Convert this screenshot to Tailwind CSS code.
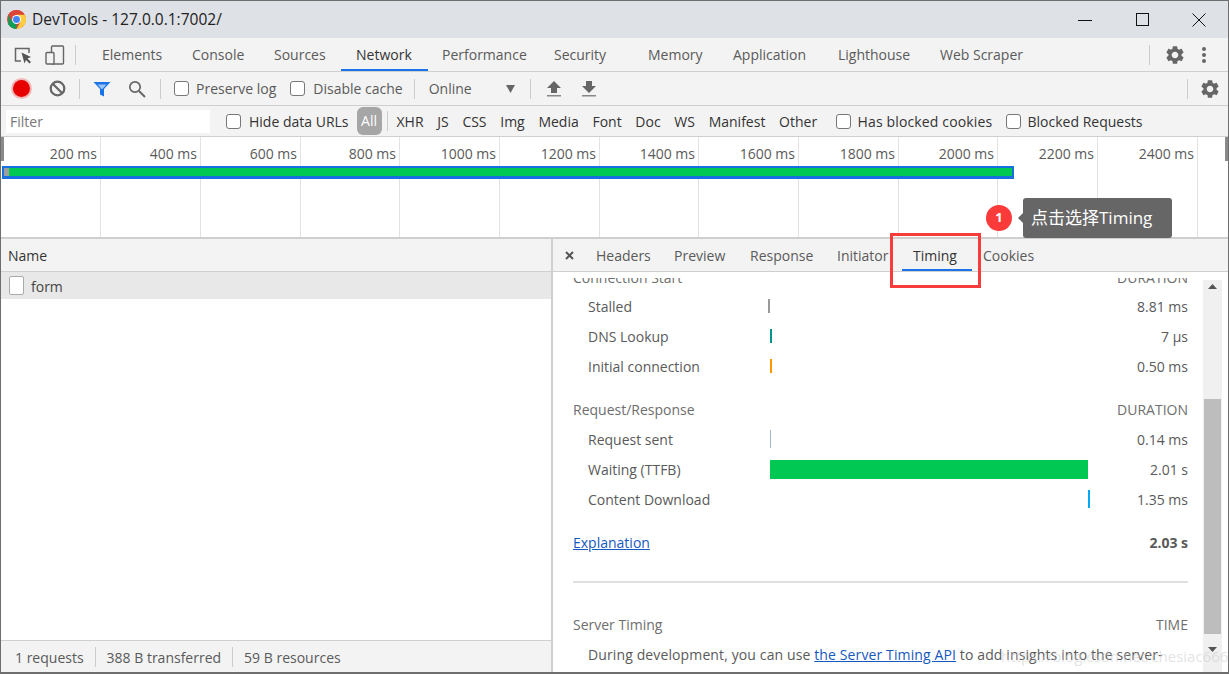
<!DOCTYPE html>
<html lang="en">
<head>
<meta charset="UTF-8">
<title>DevTools - 127.0.0.1:7002/</title>
<script src="https://cdn.jsdelivr.net/npm/@tailwindcss/browser@4"></script>
</head>
<body class="m-0 overflow-hidden bg-white">
<div class="relative w-[1229px] h-[674px] overflow-hidden flex flex-col border-t border-x border-b-2 border-[#6e6e6e] bg-white text-[14px] text-[#5a5a5a] font-['Open_Sans','Noto_Sans_CJK_SC',sans-serif]">

  <!-- title bar -->
  <div class="h-[37px] shrink-0 bg-[#dee1e6] flex items-center pl-[6px] text-[#222]">
    <svg class="w-[19px] h-[19px]" viewBox="0 0 24 24">
      <circle cx="12" cy="12" r="12" fill="#db4437"/>
      <path d="M12 24 A12 12 0 0 1 1.6 18 L1.6 6 L7 9 L12 12 Z" fill="#0f9d58"/>
      <path d="M1.6 6 A12 12 0 0 1 12 0 H12 A12 12 0 0 1 22.4 6 H12 L7 15 Z" fill="#db4437"/>
      <path d="M12 6 H22.4 A12 12 0 0 1 12 24 L17 15 Z" fill="#ffcd40"/>
      <circle cx="12" cy="12" r="5.6" fill="#fff"/>
      <circle cx="12" cy="12" r="4.4" fill="#4285f4"/>
    </svg>
    <span class="ml-[6px] text-[15.5px]">DevTools - 127.0.0.1:7002/</span>
    <div class="ml-auto flex items-center text-[#111]">
      <svg class="w-[14px] h-[14px] mr-[44px]" viewBox="0 0 14 14"><path d="M0 7.5H14" stroke="#111"/></svg>
      <svg class="w-[14px] h-[14px] mr-[42px]" viewBox="0 0 14 14"><rect x="0.5" y="0.5" width="12" height="12" fill="none" stroke="#111"/></svg>
      <svg class="w-[14px] h-[14px] mr-[22px]" viewBox="0 0 14 14"><path d="M0.5 0.5L13.5 13.5M13.5 0.5L0.5 13.5" stroke="#111"/></svg>
    </div>
  </div>

  <!-- panel tabs -->
  <div class="h-[34px] shrink-0 bg-[#f3f3f3] border-b border-[#cfcfcf] flex items-center">
    <svg class="ml-[12px] w-[20px] h-[20px]" viewBox="0 0 20 20" fill="none">
      <path d="M8 16H2.5V3.5H16V8" stroke="#666" stroke-width="1.5"/>
      <path d="M8.5 7.5L18 12L14.5 13.5L18 17L16.5 18.5L13 15L11.5 18.5Z" fill="#555"/>
    </svg>
    <svg class="ml-[12px] w-[20px] h-[20px]" viewBox="0 0 20 20" fill="none">
      <rect x="6.5" y="1" width="12" height="18" rx="1" stroke="#666" stroke-width="1.4"/>
      <rect x="1" y="7.5" width="8" height="11.5" rx="1" fill="#f3f3f3" stroke="#666" stroke-width="1.4"/>
    </svg>
    <div class="ml-[10px] w-px h-[20px] bg-[#ccc]"></div>
    <div class="flex h-full ml-[26px]">
      <div class="w-[90px] leading-[33px]">Elements</div>
      <div class="w-[82px] leading-[33px]">Console</div>
      <div class="w-[67px] leading-[33px]">Sources</div>
      <div class="relative w-[101px] leading-[33px] text-[#333] pl-[15px]">Network<span class="absolute left-0 bottom-0 w-[87px] h-[2px] bg-[#1a73e8]"></span></div>
      <div class="w-[112px] leading-[33px]">Performance</div>
      <div class="w-[94px] leading-[33px]">Security</div>
      <div class="w-[85px] leading-[33px]">Memory</div>
      <div class="w-[105px] leading-[33px]">Application</div>
      <div class="w-[102px] leading-[33px]">Lighthouse</div>
      <div class="leading-[33px]">Web Scraper</div>
    </div>
    <div class="ml-auto flex items-center">
      <div class="w-px h-[20px] bg-[#ccc] mr-[14px]"></div>
      <svg class="w-[22px] h-[22px] mr-[15px]" viewBox="0 0 24 24" fill="#666"><path d="M19.14 12.94c.04-.3.06-.61.06-.94 0-.32-.02-.64-.07-.94l2.03-1.58a.49.49 0 0 0 .12-.61l-1.92-3.32a.488.488 0 0 0-.59-.29l-2.39.96c-.5-.38-1.03-.7-1.62-.94l-.36-2.54a.484.484 0 0 0-.48-.41h-3.84c-.24 0-.43.17-.47.41l-.36 2.54c-.59.24-1.13.57-1.62.94l-2.39-.96c-.22-.08-.47 0-.59.22L2.74 8.87c-.12.21-.08.47.12.61l2.03 1.58c-.05.3-.09.63-.09.94s.02.64.07.94l-2.03 1.58a.49.49 0 0 0-.12.61l1.92 3.32c.12.22.37.29.59.22l2.39-.96c.5.38 1.03.7 1.62.94l.36 2.54c.05.24.24.41.48.41h3.84c.24 0 .44-.17.47-.41l.36-2.54c.59-.24 1.13-.56 1.62-.94l2.39.96c.22.08.47 0 .59-.22l1.92-3.32c.12-.22.07-.47-.12-.61l-2.01-1.58zM12 15.6c-1.98 0-3.6-1.62-3.6-3.6s1.62-3.6 3.6-3.6 3.6 1.62 3.6 3.6-1.62 3.6-3.6 3.6z"/></svg>
      <svg class="w-[6px] h-[18px] mr-[21px]" viewBox="0 0 6 18" fill="#666"><circle cx="3" cy="3" r="2"/><circle cx="3" cy="9" r="2"/><circle cx="3" cy="15" r="2"/></svg>
    </div>
  </div>

  <!-- network toolbar -->
  <div class="h-[34px] shrink-0 bg-[#f3f3f3] border-b border-[#cfcfcf] flex items-center">
    <div class="ml-[12px] w-[17px] h-[17px] rounded-full bg-[#e60000] ring-2 ring-[#f3b9b9]"></div>
    <svg class="ml-[19px] w-[17px] h-[17px]" viewBox="0 0 17 17" fill="none"><circle cx="8.5" cy="8.5" r="6.8" stroke="#666" stroke-width="2.2"/><path d="M4 4L13 13" stroke="#666" stroke-width="2.2"/></svg>
    <div class="ml-[13px] w-px h-[20px] bg-[#ccc]"></div>
    <svg class="ml-[13px] w-[18px] h-[16px]" viewBox="0 0 18 16"><path d="M0.5 1H17.5L11 8V15.5L7 13.5V8Z" fill="#1a73e8"/><path d="M4.5 3.5H13.5L9.5 8H8.5Z" fill="#9cc3f5"/></svg>
    <svg class="ml-[17px] w-[18px] h-[18px]" viewBox="0 0 18 18" fill="none"><circle cx="7" cy="7" r="5.2" stroke="#666" stroke-width="1.7"/><path d="M11 11L17 17" stroke="#666" stroke-width="2"/></svg>
    <div class="ml-[14px] w-px h-[20px] bg-[#ccc]"></div>
    <span class="ml-[13px] w-[15px] h-[15px] rounded-[3px] border border-[#777] bg-white"></span>
    <span class="ml-[7px]">Preserve log</span>
    <span class="ml-[14px] w-[15px] h-[15px] rounded-[3px] border border-[#777] bg-white"></span>
    <span class="ml-[8px]">Disable cache</span>
    <div class="ml-[11px] w-px h-[20px] bg-[#ccc]"></div>
    <span class="ml-[14px]">Online</span>
    <svg class="ml-[34px] w-[9px] h-[8px]" viewBox="0 0 9 8"><path d="M0 0H9L4.5 8Z" fill="#666"/></svg>
    <div class="ml-[15px] w-px h-[20px] bg-[#ccc]"></div>
    <svg class="ml-[16px] w-[14px] h-[16px]" viewBox="0 0 14 16" fill="#666"><path d="M7 0L14 7H10V12H4V7H0Z"/><rect y="14" width="14" height="1.5" fill="#888"/></svg>
    <svg class="ml-[21px] w-[14px] h-[16px]" viewBox="0 0 14 16" fill="#666"><path d="M4 0H10V5H14L7 12L0 5H4Z"/><rect y="14" width="14" height="1.5" fill="#888"/></svg>
    <div class="ml-auto w-px h-[20px] bg-[#ccc] mr-[11px]"></div>
    <svg class="w-[22px] h-[22px] mr-[7px]" viewBox="0 0 24 24" fill="#666"><path d="M19.14 12.94c.04-.3.06-.61.06-.94 0-.32-.02-.64-.07-.94l2.03-1.58a.49.49 0 0 0 .12-.61l-1.92-3.32a.488.488 0 0 0-.59-.29l-2.39.96c-.5-.38-1.03-.7-1.62-.94l-.36-2.54a.484.484 0 0 0-.48-.41h-3.84c-.24 0-.43.17-.47.41l-.36 2.54c-.59.24-1.13.57-1.62.94l-2.39-.96c-.22-.08-.47 0-.59.22L2.74 8.87c-.12.21-.08.47.12.61l2.03 1.58c-.05.3-.09.63-.09.94s.02.64.07.94l-2.03 1.58a.49.49 0 0 0-.12.61l1.92 3.32c.12.22.37.29.59.22l2.39-.96c.5.38 1.03.7 1.62.94l.36 2.54c.05.24.24.41.48.41h3.84c.24 0 .44-.17.47-.41l.36-2.54c.59-.24 1.13-.56 1.62-.94l2.39.96c.22.08.47 0 .59-.22l1.92-3.32c.12-.22.07-.47-.12-.61l-2.01-1.58zM12 15.6c-1.98 0-3.6-1.62-3.6-3.6s1.62-3.6 3.6-3.6 3.6 1.62 3.6 3.6-1.62 3.6-3.6 3.6z"/></svg>
  </div>

  <!-- filter bar -->
  <div class="h-[31px] shrink-0 bg-[#f3f3f3] border-b border-[#cfcfcf] flex items-center text-[#333]">
    <div class="ml-[5px] w-[204px] h-[23px] bg-white pl-[4px] leading-[23px] text-[#777]">Filter</div>
    <span class="ml-[16px] w-[15px] h-[15px] rounded-[3px] border border-[#777] bg-white"></span>
    <span class="ml-[8px]">Hide data URLs</span>
    <span class="ml-[8px] w-[25px] h-[28px] rounded-[6px] bg-[#a6a6a6] text-white text-center leading-[28px]">All</span>
    <div class="ml-[5px] w-px h-[20px] bg-[#ccc]"></div>
    <div class="ml-[9px] w-[421px] flex gap-[13.7px] whitespace-nowrap">
      <span>XHR</span><span>JS</span><span>CSS</span><span>Img</span><span>Media</span><span>Font</span><span>Doc</span><span>WS</span><span>Manifest</span><span>Other</span>
    </div>
    <span class="ml-[18px] w-[15px] h-[15px] rounded-[3px] border border-[#777] bg-white"></span>
    <span class="ml-[7px] w-[133px] whitespace-nowrap tracking-[0.15px]">Has blocked cookies</span>
    <span class="ml-[15px] w-[15px] h-[15px] rounded-[3px] border border-[#777] bg-white"></span>
    <span class="ml-[7px]">Blocked Requests</span>
  </div>

  <!-- overview -->
  <div class="relative h-[102px] shrink-0 bg-white border-b-2 border-[#cfcfcf] overflow-hidden">
    <div class="flex h-full pl-[1px]">
      <div class="w-[99px] pt-[6px] text-right pr-[3px] border-r border-[#e3e3e3]">200 ms</div>
      <div class="w-[100px] pt-[6px] text-right pr-[3px] border-r border-[#e3e3e3]">400 ms</div>
      <div class="w-[100px] pt-[6px] text-right pr-[3px] border-r border-[#e3e3e3]">600 ms</div>
      <div class="w-[99px] pt-[6px] text-right pr-[3px] border-r border-[#e3e3e3]">800 ms</div>
      <div class="w-[100px] pt-[6px] text-right pr-[3px] border-r border-[#e3e3e3]">1000 ms</div>
      <div class="w-[100px] pt-[6px] text-right pr-[3px] border-r border-[#e3e3e3]">1200 ms</div>
      <div class="w-[99px] pt-[6px] text-right pr-[3px] border-r border-[#e3e3e3]">1400 ms</div>
      <div class="w-[100px] pt-[6px] text-right pr-[3px] border-r border-[#e3e3e3]">1600 ms</div>
      <div class="w-[100px] pt-[6px] text-right pr-[3px] border-r border-[#e3e3e3]">1800 ms</div>
      <div class="w-[99px] pt-[6px] text-right pr-[3px] border-r border-[#e3e3e3]">2000 ms</div>
      <div class="w-[100px] pt-[6px] text-right pr-[3px] border-r border-[#e3e3e3]">2200 ms</div>
      <div class="w-[100px] pt-[6px] text-right pr-[3px] border-r border-[#e3e3e3]">2400 ms</div>
    </div>
    <div class="absolute left-0 top-0 w-[3px] h-[24px] bg-[#8a8a8a]"></div>
    <div class="absolute right-0 top-0 w-[3px] h-[24px] bg-[#8a8a8a]"></div>
    <div class="absolute left-[1px] top-[29px] w-[1012px] h-[13px] bg-[#00c853] border-t-[2px] border-b-[3px] border-x-[2px] border-[#1a6fe0]"><div class="w-[5px] h-full bg-[#9e9e9e]"></div></div>
  </div>

  <!-- split view -->
  <div class="flex flex-1 min-h-0">
    <div class="w-[552px] shrink-0 border-r-2 border-[#cfcfcf] flex flex-col text-[#333]">
      <div class="h-[33px] shrink-0 bg-[#f3f3f3] border-b border-[#cfcfcf] pl-[7px] leading-[33px]">Name</div>
      <div class="h-[27px] shrink-0 bg-[#e8e8e8] flex items-center pl-[8px] text-[#444]">
        <span class="w-[15px] h-[19px] rounded-[2px] border border-[#aaa] bg-white"></span>
        <span class="ml-[7px] pt-[2px]">form</span>
      </div>
      <div class="flex-1"></div>
      <div class="h-[32px] shrink-0 bg-[#f3f3f3] border-t border-[#cfcfcf] flex items-center pl-[14px] text-[#5a5a5a]">
        <span class="pt-[1px]">1 requests</span>
        <div class="mx-[11px] w-px h-[20px] bg-[#ccc]"></div>
        <span class="pt-[1px]">388 B transferred</span>
        <div class="mx-[11px] w-px h-[20px] bg-[#ccc]"></div>
        <span class="pt-[1px]">59 B resources</span>
      </div>
    </div>
    <div class="flex-1 min-w-0 flex flex-col">
      <div class="h-[33px] shrink-0 bg-[#f3f3f3] border-b border-[#cfcfcf] flex items-center">
        <svg class="ml-[12px] w-[9px] h-[9px]" viewBox="0 0 9 9"><path d="M1 1L8 8M8 1L1 8" stroke="#555" stroke-width="2"/></svg>
        <div class="flex h-full ml-[22px]">
          <div class="w-[78px] leading-[33px]">Headers</div>
          <div class="w-[76px] leading-[33px]">Preview</div>
          <div class="w-[87px] leading-[33px]">Response</div>
          <div class="w-[76px] leading-[33px]">Initiator</div>
          <div class="relative w-[70px] leading-[33px] text-[#333]">Timing<span class="absolute -left-[11px] bottom-0 w-[70px] h-[2px] bg-[#1a73e8]"></span></div>
          <div class="leading-[33px]">Cookies</div>
        </div>
      </div>
      <div class="flex flex-1 min-h-0">
        <div class="flex-1 min-w-0 overflow-hidden mt-[6px] pl-[20px] pr-[15px]">
          <div class="flex justify-between h-[20px] -mt-[11px] text-[#6e6e6e]"><span>Connection Start</span><span>DURATION</span></div>
          <div class="flex items-center h-[30px] mt-[4px]"><span class="w-[195px] pl-[15px]">Stalled</span><span class="w-[2px] h-[14px] bg-[#999]"></span><span class="ml-auto">8.81 ms</span></div>
          <div class="flex items-center h-[30px]"><span class="w-[197px] pl-[15px]">DNS Lookup</span><span class="w-[2px] h-[14px] bg-[#009688]"></span><span class="ml-auto">7 µs</span></div>
          <div class="flex items-center h-[30px]"><span class="w-[197px] pl-[15px]">Initial connection</span><span class="w-[2px] h-[14px] bg-[#ff9800]"></span><span class="ml-auto">0.50 ms</span></div>
          <div class="flex justify-between mt-[18px] h-[20px] text-[#6e6e6e]"><span>Request/Response</span><span>DURATION</span></div>
          <div class="flex items-center h-[30px] mt-[5px]"><span class="w-[197px] pl-[15px]">Request sent</span><span class="w-px h-[18px] bg-[#9fb6cc]"></span><span class="ml-auto">0.14 ms</span></div>
          <div class="flex items-center h-[30px]"><span class="w-[197px] pl-[15px]">Waiting (TTFB)</span><span class="w-[318px] h-[19px] bg-[#00c853]"></span><span class="ml-auto">2.01 s</span></div>
          <div class="flex items-center h-[30px]"><span class="w-[515px] pl-[15px]">Content Download</span><span class="w-[2px] h-[18px] bg-[#03a9f4]"></span><span class="ml-auto">1.35 ms</span></div>
          <div class="flex justify-between mt-[18px] h-[20px]"><span class="text-[#1558c0] underline">Explanation</span><span class="font-bold">2.03 s</span></div>
          <div class="h-[2px] bg-[#e0e0e0] mt-[29px]"></div>
          <div class="flex justify-between mt-[31px] h-[20px] text-[#6e6e6e]"><span>Server Timing</span><span>TIME</span></div>
          <div class="mt-[10px] pl-[15px] whitespace-nowrap tracking-[0.12px]">During development, you can use <span class="text-[#1558c0] underline">the Server Timing API</span> to add insights into the server-</div>
        </div>
        <div class="w-[19px] shrink-0 mr-[6px] mt-[8px] bg-[#f0f0f0] flex flex-col items-center">
          <svg class="mt-[4px] w-[9px] h-[5px]" viewBox="0 0 9 5"><path d="M0 5L4.5 0L9 5Z" fill="#555"/></svg>
          <div class="mt-[110px] w-[17px] h-[235px] bg-[#bdbdbd]"></div>
          <svg class="mt-[13px] w-[9px] h-[5px]" viewBox="0 0 9 5"><path d="M0 0L4.5 5L9 0Z" fill="#555"/></svg>
        </div>
      </div>
    </div>
  </div>

  <!-- annotations over the screenshot -->
  <div class="absolute left-[889px] top-[232px] w-[91px] h-[55px] border-[3px] border-[#f83b3b]"></div>
  <div class="absolute left-[985px] top-[204px] w-[26px] h-[26px] rounded-full bg-[#fb3a3a] text-white text-[13px] font-bold text-center leading-[25px]">1</div>
  <div class="absolute left-[1022px] top-[197px] w-[149px] h-[40px] rounded-[3px] bg-[#666] text-white text-[17px] leading-[40px] pl-[8px] whitespace-nowrap">点击选择Timing</div>
  <div class="absolute left-[1017px] top-[212px] w-0 h-0 border-y-[5px] border-y-transparent border-r-[5px] border-r-[#666]"></div>
  <div class="absolute left-[1000px] top-[644px] text-[#c8c8c8]/50 text-[15px] whitespace-nowrap">https://blog.csdn.net/chesiac666</div>
</div>
</body>
</html>
